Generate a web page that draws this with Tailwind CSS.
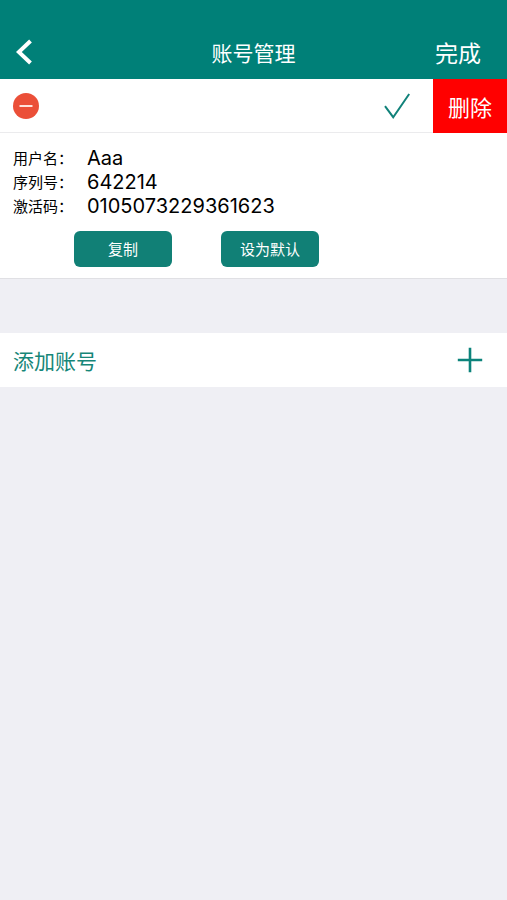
<!DOCTYPE html>
<html lang="zh-CN">
<head>
<meta charset="utf-8">
<meta name="viewport" content="width=device-width, initial-scale=1">
<title>账号管理</title>
<script src="https://cdn.jsdelivr.net/npm/@tailwindcss/browser@4"></script>
</head>
<body class="min-h-screen bg-[#efeff4] font-['Noto_Sans_CJK_SC',sans-serif] text-black">
<header class="grid grid-cols-[1fr_auto_1fr] items-center bg-[#008078] pt-[25px] text-white">
  <button type="button" aria-label="返回" class="flex h-[54px] w-12 items-center pl-4">
    <svg class="h-[26px] w-4" viewBox="0 0 16 26" fill="none" stroke="currentColor" stroke-width="4" aria-hidden="true"><path d="M14.5 2 2.8 13l11.7 11"/></svg>
  </button>
  <h1 class="text-[21px] leading-8">账号管理</h1>
  <button type="button" class="justify-self-end pr-[26px] text-[23px] leading-8">完成</button>
</header>
<main>
  <section class="border-b border-[#e0e0e4] bg-white">
    <div class="flex h-[54px] items-stretch border-b border-[#ebebed]">
      <button type="button" aria-label="移除账号" class="pl-[13px]">
        <svg class="size-[26px]" viewBox="0 0 26 26" aria-hidden="true"><circle cx="13" cy="13" r="13" fill="#eb4f38"/><path d="M6.5 13h13" stroke="#ffe3dc" stroke-width="2"/></svg>
      </button>
      <button type="button" aria-label="选中账号" class="ml-auto pr-[23px]">
        <svg class="size-[26px]" viewBox="0 0 26 26" fill="none" stroke="#11827a" stroke-width="2" aria-hidden="true"><path d="M1 13.2 9.2 24.2 25.2 1"/></svg>
      </button>
      <button type="button" class="-mb-px w-[74px] bg-[#ff0000] text-[22px] leading-8 text-white">删除</button>
    </div>
    <div class="px-[13px] pt-[13px] pb-[11px]">
      <dl class="grid grid-cols-[74px_1fr] items-center">
        <dt class="text-[15px] leading-6">用户名：</dt><dd class="text-xl leading-6 font-['Inter',sans-serif]">Aaa</dd>
        <dt class="text-[15px] leading-6">序列号：</dt><dd class="text-xl leading-6 font-['Inter',sans-serif]">642214</dd>
        <dt class="text-[15px] leading-6">激活码：</dt><dd class="text-xl leading-6 font-['Inter',sans-serif]">0105073229361623</dd>
      </dl>
      <div class="mt-[13px] ml-[61px] flex gap-[49px]">
        <button type="button" class="h-9 w-[98px] rounded-md bg-[#118076] text-[15px] text-white">复制</button>
        <button type="button" class="h-9 w-[98px] rounded-md bg-[#118076] text-[15px] text-white">设为默认</button>
      </div>
    </div>
  </section>
  <button type="button" class="mt-[54px] flex h-[54px] w-full items-center justify-between bg-white pr-6 pl-[13px] text-[21px] leading-8 text-[#168678]">
    <span>添加账号</span>
    <svg class="size-[26px]" viewBox="0 0 26 26" fill="none" stroke="#0c837b" stroke-width="2.6" aria-hidden="true"><path d="M13 .8v24.4M.8 13h24.4"/></svg>
  </button>
</main>
</body>
</html>
